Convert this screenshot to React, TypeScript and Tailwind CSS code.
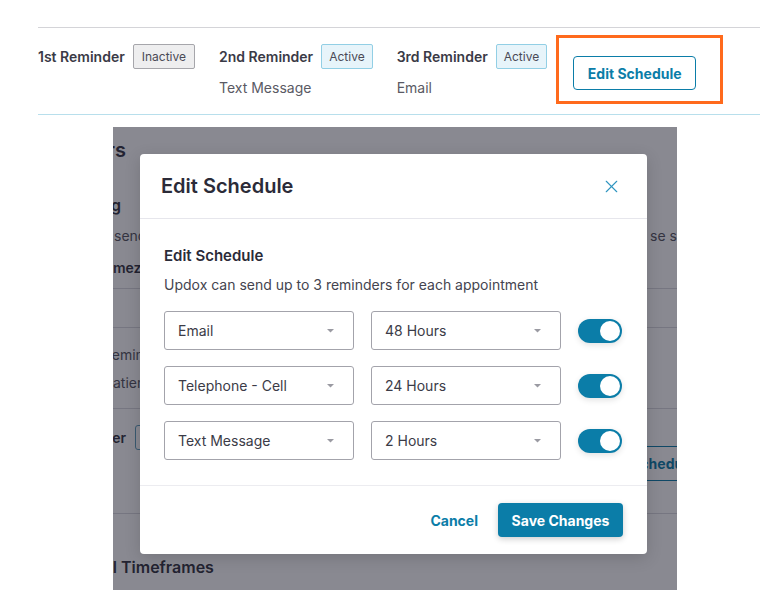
import { X } from 'lucide-react';

const reminders = [
  { label: '1st Reminder', status: 'Inactive', via: '' },
  { label: '2nd Reminder', status: 'Active', via: 'Text Message' },
  { label: '3rd Reminder', status: 'Active', via: 'Email' },
];

const rows = [
  { method: 'Email', time: '48 Hours' },
  { method: 'Telephone - Cell', time: '24 Hours' },
  { method: 'Text Message', time: '2 Hours' },
];

function Caret() {
  return (
    <svg width="7" height="4" viewBox="0 0 7 4" className="shrink-0">
      <path d="M0 0h7L3.5 3.5z" fill="#9a9aa2" />
    </svg>
  );
}

function SelectBox({ value }: { value: string }) {
  return (
    <div className="flex h-[39px] w-[190px] items-center justify-between rounded-[3px] border border-[#a3a3ab] pl-[13px] pr-[19px] text-[14px] text-[#3b3b47]">
      <span>{value}</span>
      <Caret />
    </div>
  );
}

function Toggle() {
  return (
    <div className="flex h-[24px] w-[44px] items-center justify-end rounded-full bg-[#0b7da8] pr-[2px] shadow-[0_2px_6px_rgba(0,0,0,0.12)]">
      <div className="h-[20px] w-[20px] rounded-full bg-white" />
    </div>
  );
}

function Badge({ status }: { status: string }) {
  const active = status === 'Active';
  return (
    <span
      className={
        active
          ? 'flex h-[25px] items-center rounded-[2px] border border-[#92cfe5] bg-[#e7f4fa] px-[7px] text-[12px] text-[#4a4a56]'
          : 'flex h-[25px] items-center rounded-[2px] border border-[#a6a6ab] bg-[#eeeeef] px-[8px] text-[12px] text-[#4a4a56]'
      }
    >
      {status}
    </span>
  );
}

export default function App() {
  return (
    <div className="h-[598px] w-[781px] overflow-hidden bg-white font-['Inter',sans-serif]">
      {/* reminder summary */}
      <div className="ml-[38px] mr-[21px] mt-[27px] flex items-start border-y border-t-[#d4d4d8] border-b-[#b8dfec] pb-[10px] pt-[7px]">
        <div className="mt-[9px] flex gap-[24px]">
          {reminders.map((r) => (
            <div key={r.label} className="flex flex-col">
              <div className="flex items-center gap-[8px]">
                <span className="text-[14px] font-semibold text-[#3a3a46]">{r.label}</span>
                <Badge status={r.status} />
              </div>
              {r.via && <span className="mt-[9px] text-[14px] leading-[20px] text-[#5a5a64]">{r.via}</span>}
            </div>
          ))}
        </div>
        <div className="ml-[9px] h-[69px] w-[167px] border-[3px] border-[#ff6a1c] pl-[14px] pt-[18px]">
          <button className="h-[34px] w-[123px] rounded-[4px] border border-[#0b7da8] text-[14px] font-bold text-[#0b7da8]">
            Edit Schedule
          </button>
        </div>
      </div>

      {/* dimmed page with modal */}
      <div className="relative ml-[113px] mt-[12px] h-[463px] w-[564px] overflow-hidden bg-white text-[#333340]">
        <div className="flex flex-col">
          <div className="mt-[10px] flex h-[26px] w-[13px] items-center justify-end whitespace-nowrap">
            <span className="shrink-0 text-[20px] font-semibold">Reminders</span>
          </div>
          <div className="mt-[28px] flex h-[28px] w-[8px] items-center justify-end whitespace-nowrap">
            <span className="shrink-0 text-[16px] font-semibold">Scheduling</span>
          </div>
          <div className="mt-[6px] flex h-[20px] items-center whitespace-nowrap text-[14px] text-[#555560]">
            <div className="w-[27px]">
              <span className="ml-[1px]">send reminders to your patients</span>
            </div>
            <div className="ml-auto w-[30px] overflow-hidden pl-[3px]">se schedule</div>
          </div>
          <div className="mt-[12px] flex h-[20px] items-center whitespace-nowrap text-[14px] font-semibold">
            <span className="-ml-[13px]">Timezone</span>
          </div>
          <div className="mt-[11px] h-px bg-[#d8d8de]" />
          <div className="mt-[38px] h-px bg-[#d8d8de]" />
          <div className="mt-[16px] flex h-[20px] items-center whitespace-nowrap text-[14px] text-[#555560]">
            <span className="-ml-[10px]">Reminders</span>
          </div>
          <div className="mt-[8px] flex h-[20px] items-center whitespace-nowrap text-[14px] text-[#555560]">
            <span className="-ml-[9px]">Patients</span>
          </div>
          <div className="mt-[16px] h-px bg-[#d8d8de]" />
          <div className="mt-[16px] flex h-[56px] items-start">
            <div className="flex h-[25px] w-[13px] shrink-0 items-center justify-end whitespace-nowrap">
              <span className="shrink-0 text-[14px] font-semibold">Reminder</span>
            </div>
            <div className="ml-[9px] h-[25px] w-[200px] shrink-0 rounded-[3px] border border-[#5f9fbd]" />
            <button className="ml-[252px] mt-[21px] h-[35px] w-[123px] shrink-0 rounded-[4px] border border-[#0b7da8] text-[14px] font-bold text-[#0b7da8]">
              Edit Schedule
            </button>
          </div>
          <div className="mt-[32px] h-px bg-[#d8d8de]" />
          <div className="mt-[43px] flex h-[20px] items-center whitespace-nowrap text-[16px] font-semibold">
            <div className="flex w-[4px] justify-end">
              <span className="shrink-0">Interval</span>
            </div>
            <span className="ml-[4px]">Timeframes</span>
          </div>
          <div className="mt-[8px] whitespace-nowrap pl-[6px] text-[14px] text-[#555560]">
            Choose when each reminder is sent before the appointment
          </div>
        </div>

        <div className="absolute inset-0 bg-[#141424]/50" />

        <div className="absolute left-[27px] top-[27px] flex h-[400px] w-[507px] flex-col rounded-[4px] bg-white shadow-[0_4px_16px_rgba(0,0,0,0.15)]">
          <div className="flex h-[65px] shrink-0 items-center justify-between border-b border-[#e6e6ec] pl-[21px] pr-[25px]">
            <h2 className="text-[20px] font-semibold text-[#2b2b38]">Edit Schedule</h2>
            <X size={21} strokeWidth={1.3} className="text-[#2f95c0]" />
          </div>
          <div className="flex flex-col border-b border-[#ececf0] px-[24px] pb-[25px] pt-[26px]">
            <h3 className="text-[15px] font-semibold leading-[22px] text-[#2b2b38]">Edit Schedule</h3>
            <p className="mt-[8px] text-[14px] leading-[20px] text-[#44444f]">
              Updox can send up to 3 reminders for each appointment
            </p>
            <div className="mt-[16px] flex flex-col gap-[16px]">
              {rows.map((r) => (
                <div key={r.method} className="flex items-center gap-[17px]">
                  <SelectBox value={r.method} />
                  <SelectBox value={r.time} />
                  <Toggle />
                </div>
              ))}
            </div>
          </div>
          <div className="flex flex-1 items-start justify-end gap-[20px] pr-[24px] pt-[17px]">
            <button className="h-[34px] text-[14px] font-bold text-[#0b7da8]">Cancel</button>
            <button className="h-[34px] w-[125px] rounded-[4px] bg-[#0b7da8] text-[14px] font-bold text-white shadow-[0_2px_6px_rgba(0,0,0,0.2)]">
              Save Changes
            </button>
          </div>
        </div>
      </div>
    </div>
  );
}
